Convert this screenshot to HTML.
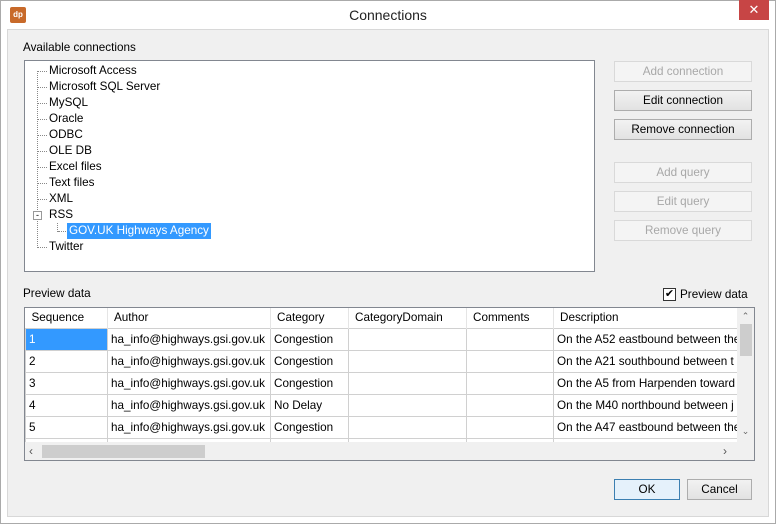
<!DOCTYPE html>
<html><head><style>
*{box-sizing:border-box;margin:0;padding:0}
body{width:776px;height:524px;background:#fff;font-family:"Liberation Sans",sans-serif;font-size:11.7px;color:#000;position:relative;overflow:hidden}
.abs{position:absolute}
.win{left:0;top:0;width:776px;height:524px;border:1px solid #aaa;background:#fff}
.body{left:7px;top:29px;width:762px;height:488px;background:#f0f0f0;border:1px solid #d8d8d8}
.btn{position:absolute;left:614px;width:138px;height:21px;border:1px solid #adadad;background:linear-gradient(#f2f2f2,#e2e2e2);text-align:center;line-height:19px;font-size:11.7px}
.dis{color:#a8a8a8;border-color:#d9d9d9;background:#f4f4f4}
.tree{left:24px;top:60px;width:571px;height:212px;background:#fff;border:1px solid #828790}
.ti{position:absolute;left:24px;height:16px;line-height:16px;font-size:11.7px}
.dot{position:absolute;border-top:1px dotted #888;width:9px}
table{border-collapse:collapse;font-size:11.7px;table-layout:fixed}
td{border:1px solid #d0d0d0;height:22px;padding:0 3px;white-space:nowrap;overflow:hidden}
th{font-weight:normal;text-align:left;height:20px;padding:0 6px;border-right:1px solid #e5e5e5;background:#fff;white-space:nowrap;overflow:hidden}
</style></head><body>
<div class="abs win"></div>
<div class="abs" style="left:10px;top:7px;width:16px;height:16px;background:#c86a2a;border-radius:2px;color:#fff;font-size:8px;font-weight:bold;text-align:center;line-height:16px">dp</div>
<div class="abs" style="left:0;width:776px;top:7px;text-align:center;font-size:14px;color:#222">Connections</div>
<div class="abs" style="left:739px;top:0;width:30px;height:20px;background:#c74545;color:#fff;text-align:center;line-height:19px;font-size:13px">✕</div>
<div class="abs body"></div>
<div class="abs" style="left:23px;top:41px">Available connections</div>
<div class="abs tree">
<div class="abs" style="left:12px;top:10px;height:177px;border-left:1px dotted #888"></div>
<div class="dot" style="left:13px;top:10px"></div><div class="ti" style="top:2px">Microsoft Access</div>
<div class="dot" style="left:13px;top:26px"></div><div class="ti" style="top:18px">Microsoft SQL Server</div>
<div class="dot" style="left:13px;top:42px"></div><div class="ti" style="top:34px">MySQL</div>
<div class="dot" style="left:13px;top:58px"></div><div class="ti" style="top:50px">Oracle</div>
<div class="dot" style="left:13px;top:74px"></div><div class="ti" style="top:66px">ODBC</div>
<div class="dot" style="left:13px;top:90px"></div><div class="ti" style="top:82px">OLE DB</div>
<div class="dot" style="left:13px;top:106px"></div><div class="ti" style="top:98px">Excel files</div>
<div class="dot" style="left:13px;top:122px"></div><div class="ti" style="top:114px">Text files</div>
<div class="dot" style="left:13px;top:138px"></div><div class="ti" style="top:130px">XML</div>
<div class="abs" style="left:8px;top:150px;width:9px;height:9px;border:1px solid #999;background:#fff;font-size:9px;line-height:6px;text-align:center">-</div>
<div class="ti" style="top:146px">RSS</div>
<div class="abs" style="left:32px;top:162px;height:9px;border-left:1px dotted #888"></div>
<div class="dot" style="left:33px;top:170px;width:10px"></div>
<div class="ti" style="left:42px;top:162px;background:#3399ff;color:#fff;padding:0 2px">GOV.UK Highways Agency</div>
<div class="dot" style="left:13px;top:186px"></div><div class="ti" style="top:178px">Twitter</div>
</div>
<div class="btn dis" style="top:61px">Add connection</div>
<div class="btn" style="top:90px">Edit connection</div>
<div class="btn" style="top:119px">Remove connection</div>
<div class="btn dis" style="top:162px">Add query</div>
<div class="btn dis" style="top:191px">Edit query</div>
<div class="btn dis" style="top:220px">Remove query</div>
<div class="abs" style="left:23px;top:287px">Preview data</div>
<div class="abs" style="left:663px;top:288px;width:13px;height:13px;border:1px solid #333;background:#fff;font-size:11px;line-height:11px;text-align:center">✔</div>
<div class="abs" style="left:680px;top:288px">Preview data</div>
<div class="abs" style="left:24px;top:307px;width:731px;height:154px;border:1px solid #828790;background:#fff;overflow:hidden">
<table style="width:713px">
<colgroup><col style="width:82px"><col style="width:163px"><col style="width:78px"><col style="width:118px"><col style="width:87px"><col style="width:185px"></colgroup>
<tr><th>Sequence</th><th>Author</th><th>Category</th><th>CategoryDomain</th><th>Comments</th><th>Description</th></tr>
<tr><td style="background:#3399ff;color:#fff">1</td><td>ha_info@highways.gsi.gov.uk</td><td>Congestion</td><td></td><td></td><td>On the A52 eastbound between the</td></tr>
<tr><td>2</td><td>ha_info@highways.gsi.gov.uk</td><td>Congestion</td><td></td><td></td><td>On the A21 southbound between t</td></tr>
<tr><td>3</td><td>ha_info@highways.gsi.gov.uk</td><td>Congestion</td><td></td><td></td><td>On the A5 from Harpenden toward</td></tr>
<tr><td>4</td><td>ha_info@highways.gsi.gov.uk</td><td>No Delay</td><td></td><td></td><td>On the M40 northbound between j</td></tr>
<tr><td>5</td><td>ha_info@highways.gsi.gov.uk</td><td>Congestion</td><td></td><td></td><td>On the A47 eastbound between the</td></tr>
<tr><td></td><td></td><td></td><td></td><td></td><td></td></tr>
</table>
<div class="abs" style="left:712px;top:0;width:17px;height:134px;background:#f0f0f0"></div>
<div class="abs" style="left:713px;top:3px;width:15px;text-align:center;color:#666;font-size:9px">⌃</div>
<div class="abs" style="left:715px;top:16px;width:12px;height:32px;background:#cdcdcd"></div>
<div class="abs" style="left:713px;top:118px;width:15px;text-align:center;color:#666;font-size:9px">⌄</div>
<div class="abs" style="left:0;top:134px;width:729px;height:18px;background:#f0f0f0"></div>
<div class="abs" style="left:4px;top:136px;color:#555;font-size:12px">‹</div>
<div class="abs" style="left:17px;top:137px;width:163px;height:13px;background:#cdcdcd"></div>
<div class="abs" style="left:698px;top:136px;color:#555;font-size:12px">›</div>
</div>
<div class="btn" style="left:614px;top:479px;width:66px;border-color:#3c7fb1;background:#e5f1fb">OK</div>
<div class="btn" style="left:687px;top:479px;width:65px">Cancel</div>
</body></html>
